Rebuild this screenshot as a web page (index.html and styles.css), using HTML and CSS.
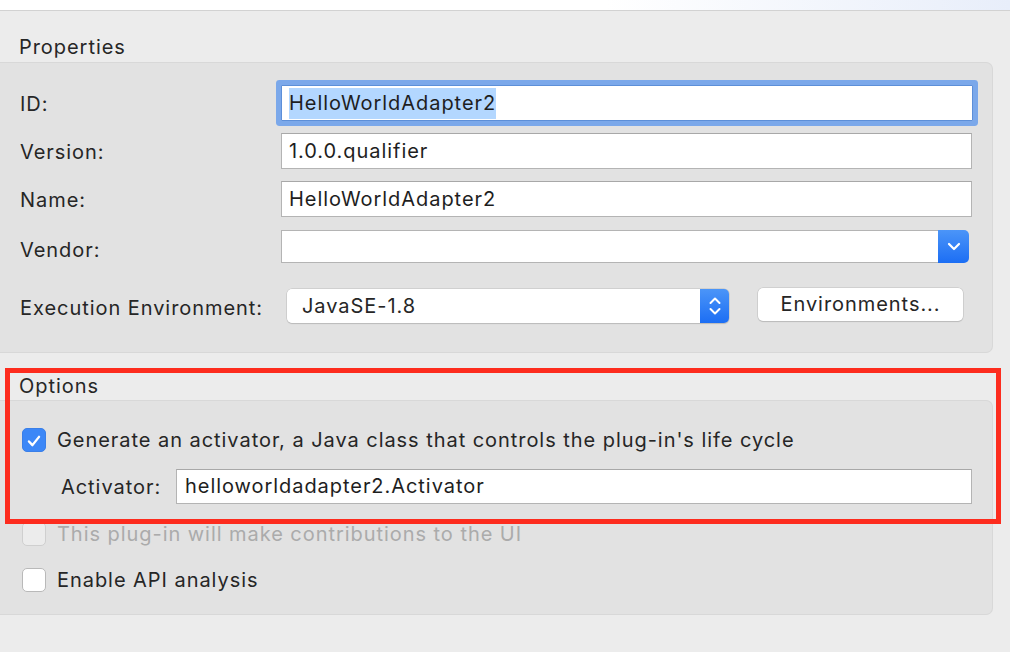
FILE: index.html
```html
<!DOCTYPE html>
<html>
<head>
<meta charset="utf-8">
<link rel="stylesheet" href="styles.css">
</head>
<body>
<div class="topbar"></div>
<div class="page">
  <div class="group-title">Properties</div>
  <div class="group props">
    <div class="row">
      <div class="label">ID:</div>
      <div class="field focused"><span class="sel">HelloWorldAdapter2</span></div>
    </div>
    <div class="row">
      <div class="label">Version:</div>
      <div class="field">1.0.0.qualifier</div>
    </div>
    <div class="row">
      <div class="label">Name:</div>
      <div class="field">HelloWorldAdapter2</div>
    </div>
    <div class="row vendor-row">
      <div class="label vendor-label">Vendor:</div>
      <div class="combo">
        <div class="combo-text"></div>
        <div class="combo-btn">
          <svg width="14" height="9" viewBox="0 0 14 9"><path d="M2 2l5 5 5-5" fill="none" stroke="#fff" stroke-width="2.2" stroke-linecap="round" stroke-linejoin="round"/></svg>
        </div>
      </div>
    </div>
    <div class="row exec-row">
      <div class="label exec-label">Execution Environment:</div>
      <div class="popup">
        <div class="popup-text">JavaSE-1.8</div>
        <div class="popup-btn">
          <svg width="14" height="22" viewBox="0 0 14 22"><path d="M2.5 8l4.5-4.5 4.5 4.5M2.5 14l4.5 4.5 4.5-4.5" fill="none" stroke="#fff" stroke-width="2" stroke-linecap="round" stroke-linejoin="round"/></svg>
        </div>
      </div>
      <div class="button">Environments...</div>
    </div>
  </div>

  <div class="group-title options-title">Options</div>
  <div class="group options">
    <div class="check-row">
      <span class="checkbox checked">
        <svg width="24" height="24" viewBox="0 0 24 24"><path d="M6.5 12.5l3.8 4L17.5 7.5" fill="none" stroke="#fff" stroke-width="2.6" stroke-linecap="round" stroke-linejoin="round"/></svg>
      </span>
      <span class="check-text">Generate an activator, a Java class that controls the plug-in's life cycle</span>
    </div>
    <div class="activator-row">
      <div class="act-label">Activator:</div>
      <div class="field act-field">helloworldadapter2.Activator</div>
    </div>
    <div class="check-row disabled-row">
      <span class="checkbox disabled"></span>
      <span class="check-text">This plug-in will make contributions to the UI</span>
    </div>
    <div class="check-row api-row">
      <span class="checkbox"></span>
      <span class="check-text">Enable API analysis</span>
    </div>
  </div>
</div>
<div class="highlight"></div>
</body>
</html>
```

FILE: styles.css
```css
html, body {
  margin: 0;
  padding: 0;
}
body {
  width: 1010px;
  height: 652px;
  overflow: hidden;
  background: #ececec;
  font-family: Inter, "Noto Sans", "Liberation Sans", sans-serif;
  font-size: 20px;
  letter-spacing: 0.95px;
  color: #262626;
  position: relative;
}
.topbar {
  height: 10px;
  background: linear-gradient(to right, #ffffff 0%, #ffffff 60%, #e8eefa 100%);
  border-bottom: 1px solid #d2d2d2;
}
.page {
  padding-right: 17px;
}
.group-title {
  height: 24px;
  line-height: 24px;
  padding-top: 24px;
  padding-left: 19px;
  margin-bottom: 3px;
}
.options-title {
  padding-top: 21px;
  margin-bottom: 2px;
}
.group {
  background: #e2e2e2;
  border: 1px solid #d8d8d8;
  border-left: none;
  border-radius: 0 7px 7px 0;
}
.props {
  padding: 22px 20px 29px 20px;
  display: flex;
  flex-direction: column;
  gap: 12px;
}
.row {
  display: flex;
  align-items: center;
  height: 36px;
}
.label {
  width: 261px;
  flex: none;
  line-height: 24px;
  padding-top: 2px;
}
.vendor-label {
  padding-top: 7px;
}
.field {
  flex: 1;
  height: 36px;
  box-sizing: border-box;
  background: #fff;
  border: 1px solid #b4b4b4;
  border-top-color: #a8a8a8;
  padding-left: 7px;
  line-height: 34px;
  color: #1e1e1e;
  white-space: nowrap;
}
.field.focused {
  border: 1px solid #5d8fd8;
  border-radius: 1px;
  box-shadow: 0 0 0 5px #7ba8ea;
  margin-right: -1px;
}
.sel {
  background: #b3d7ff;
  padding: 3px 0 4px 0;
}
.vendor-row {
  height: 34px;
}
.combo {
  flex: none;
  width: 688px;
  height: 33px;
  display: flex;
}
.combo-text {
  flex: 1;
  background: #fff;
  border: 1px solid #b4b4b4;
  border-right: none;
}
.combo-btn {
  width: 31px;
  border-radius: 0 5px 5px 0;
  background: linear-gradient(to bottom, #4b95f8, #1c6ef4);
  display: flex;
  align-items: center;
  justify-content: center;
}
.exec-row {
  margin-top: 13px;
  height: 35px;
}
.exec-label {
  width: 267px;
  padding-top: 5px;
}
.popup {
  flex: none;
  width: 442px;
  height: 34px;
  display: flex;
  border-radius: 5px;
  box-shadow: 0 0 0 0.5px #bdbdbd, 0 1px 1px rgba(0,0,0,0.18);
  overflow: hidden;
}
.popup-text {
  flex: 1;
  background: #fff;
  padding-left: 15px;
  line-height: 34px;
}
.popup-btn {
  width: 29px;
  background: linear-gradient(to bottom, #4b95f8, #1c6ef4);
  display: flex;
  align-items: center;
  justify-content: center;
}
.button {
  flex: none;
  margin-left: 29px;
  width: 205px;
  height: 33px;
  line-height: 33px;
  text-align: center;
  background: #fff;
  border-radius: 5px;
  box-shadow: 0 0 0 0.5px #bdbdbd, 0 1px 1px rgba(0,0,0,0.18);
  margin-top: -2px;
}
.options {
  padding: 27px 20px 22px 22px;
  display: flex;
  flex-direction: column;
}
.check-row {
  display: flex;
  align-items: center;
  height: 24px;
}
.checkbox {
  flex: none;
  width: 24px;
  height: 24px;
  box-sizing: border-box;
  border-radius: 5px;
  background: #fff;
  border: 1px solid #b9b9b9;
  margin-right: 11px;
  display: flex;
}
.checkbox.checked {
  background: #3c87f7;
  border-color: #3a7fe8;
}
.checkbox.disabled {
  background: #ececec;
  border-color: #cfcfcf;
}
.check-text {
  line-height: 24px;
  white-space: nowrap;
}
.disabled-row {
  margin-top: 18px;
  color: #ababab;
}
.api-row {
  margin-top: 22px;
}
.activator-row {
  display: flex;
  align-items: center;
  margin-top: 17px;
  height: 35px;
}
.act-label {
  box-sizing: border-box;
  width: 154px;
  padding-left: 39px;
  flex: none;
}
.act-field {
  height: 35px;
  line-height: 33px;
  padding-left: 8px;
}
.highlight {
  position: absolute;
  left: 5px;
  top: 368px;
  width: 986px;
  height: 146px;
  border: 5px solid #fd2c1e;
  pointer-events: none;
}
```
